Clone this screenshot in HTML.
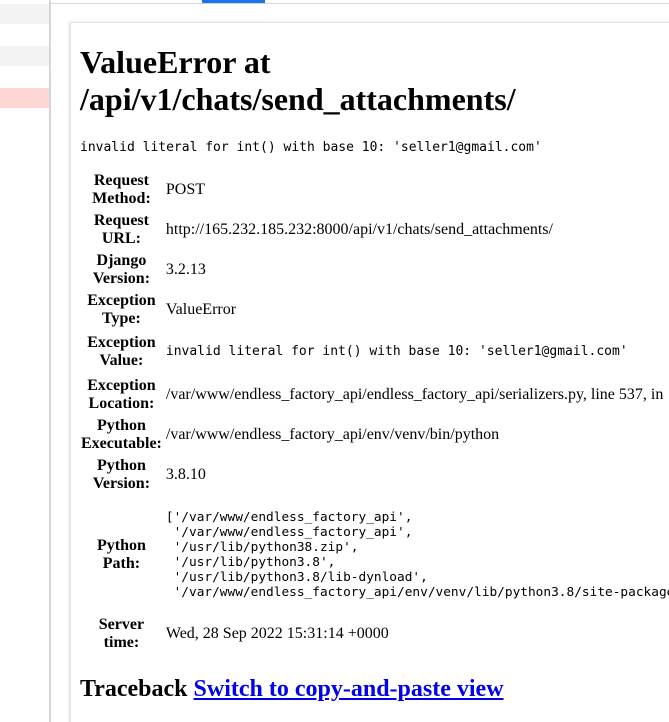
<!DOCTYPE html>
<html><head><meta charset="utf-8"><style>
html,body{margin:0;width:669px;height:722px;overflow:hidden;}
body{background:#fff;position:relative;font-family:"Liberation Serif",serif;}
.sb{position:absolute;left:0;top:0;width:49px;height:722px;border-right:2px solid #d4d6da;background:#fff}
.r{position:absolute;left:0;width:49px;height:20px}
.top{position:absolute;left:51px;top:0;right:0;height:3px;border-bottom:1px solid #d4d6da}
.blue{position:absolute;left:202px;top:0;width:63px;height:3px;background:#1a73e8}
.card{position:absolute;left:70px;top:22px;width:620px;height:720px;border:1px solid #e4e4e4;box-shadow:-1px 0 3px #ddd;background:#fff}
h1{position:absolute;left:9px;top:21px;margin:0;font-size:32px;line-height:37px;font-weight:bold;}
.msg{position:absolute;left:9px;top:117px;font-family:"DejaVu Sans Mono",monospace;font-size:13px;white-space:pre}
table{position:absolute;left:8px;top:147px;border-collapse:collapse;font-size:16px}
th{text-align:center;width:80px;padding:2px 2px;line-height:18px;vertical-align:middle;}
td{padding:2px 2px;line-height:18px;vertical-align:middle;white-space:nowrap;height:36px}
.m{font-family:"DejaVu Sans Mono",monospace;font-size:13px}
pre{margin:0;font-family:"DejaVu Sans Mono",monospace;font-size:12.8px;line-height:15px}
h2{position:absolute;left:9px;top:653px;margin:0;font-size:24px;font-weight:bold}
a{color:#0000ee}
</style></head><body>
<div class="sb">
<div class="r" style="top:4px;background:#f3f3f3"></div>
<div class="r" style="top:46px;background:#f3f3f3"></div>
<div class="r" style="top:88px;background:#ffd6d6"></div>
</div>
<div class="top"></div><div class="blue"></div>
<div class="card">
<h1>ValueError at<br>/api/v1/chats/send_attachments/</h1>
<div class="msg">invalid literal for int() with base 10: 'seller1@gmail.com'</div>
<table>
<tr><th>Request Method:</th><td>POST</td></tr>
<tr><th>Request URL:</th><td>http://165.232.185.232:8000/api/v1/chats/send_attachments/</td></tr>
<tr><th>Django Version:</th><td>3.2.13</td></tr>
<tr><th>Exception Type:</th><td>ValueError</td></tr>
<tr><th>Exception Value:</th><td class="m" style="height:40px">invalid literal for int() with base 10: 'seller1@gmail.com'</td></tr>
<tr><th>Exception Location:</th><td style="height:37px">/var/www/endless_factory_api/endless_factory_api/serializers.py, line 537, in</td></tr>
<tr><th>Python Executable:</th><td>/var/www/endless_factory_api/env/venv/bin/python</td></tr>
<tr><th>Python Version:</th><td>3.8.10</td></tr>
<tr><th>Python Path:</th><td style="height:115px"><pre>['/var/www/endless_factory_api',
 '/var/www/endless_factory_api',
 '/usr/lib/python38.zip',
 '/usr/lib/python3.8',
 '/usr/lib/python3.8/lib-dynload',
 '/var/www/endless_factory_api/env/venv/lib/python3.8/site-packages']</pre></td></tr>
<tr><th>Server time:</th><td>Wed, 28 Sep 2022 15:31:14 +0000</td></tr>
</table>
<h2>Traceback <a href="#">Switch to copy-and-paste view</a></h2>
</div>
</body></html>
